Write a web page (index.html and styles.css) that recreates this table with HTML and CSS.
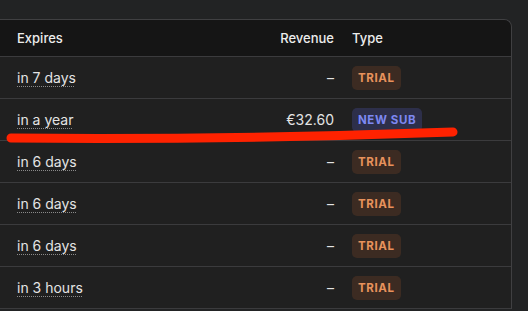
FILE: index.html
```html
<!DOCTYPE html>
<html>
<head>
<meta charset="utf-8">
<link rel="stylesheet" href="styles.css">
</head>
<body>
<div class="page">
  <div class="table">
    <div class="row head">
      <div class="cell c-exp">Expires</div>
      <div class="cell c-rev">Revenue</div>
      <div class="cell c-type">Type</div>
    </div>
    <div class="row">
      <div class="cell c-exp"><span class="rel">in 7 days</span></div>
      <div class="cell c-rev">–</div>
      <div class="cell c-type"><span class="badge trial">TRIAL</span></div>
    </div>
    <div class="row">
      <div class="cell c-exp"><span class="rel">in a year</span></div>
      <div class="cell c-rev">€32.60</div>
      <div class="cell c-type"><span class="badge sub">NEW SUB</span></div>
    </div>
    <div class="row">
      <div class="cell c-exp"><span class="rel">in 6 days</span></div>
      <div class="cell c-rev">–</div>
      <div class="cell c-type"><span class="badge trial">TRIAL</span></div>
    </div>
    <div class="row">
      <div class="cell c-exp"><span class="rel">in 6 days</span></div>
      <div class="cell c-rev">–</div>
      <div class="cell c-type"><span class="badge trial">TRIAL</span></div>
    </div>
    <div class="row">
      <div class="cell c-exp"><span class="rel">in 6 days</span></div>
      <div class="cell c-rev">–</div>
      <div class="cell c-type"><span class="badge trial">TRIAL</span></div>
    </div>
    <div class="row">
      <div class="cell c-exp"><span class="rel">in 3 hours</span></div>
      <div class="cell c-rev">–</div>
      <div class="cell c-type"><span class="badge trial">TRIAL</span></div>
    </div>
  </div>
  <svg class="mark" width="528" height="311" viewBox="0 0 528 311">
    <path d="M11 138 Q 230 140 453 132" fill="none" stroke="#ff2200" stroke-width="9" stroke-linecap="round"/>
  </svg>
</div>
</body>
</html>
```

FILE: styles.css
```css
html, body {
  margin: 0;
  padding: 0;
  background: #222324;
  overflow: hidden;
}
.page {
  position: relative;
  width: 528px;
  height: 311px;
  padding-top: 19px;
  box-sizing: border-box;
  font-family: Inter, "Noto Sans", sans-serif;
  color: #e4e4e4;
}
.table {
  width: 511px;
  border: 1px solid #404042;
  border-left: none;
  border-bottom: none;
  border-radius: 0 8px 0 0;
  background: #202020;
  overflow: hidden;
}
.row {
  display: flex;
  height: 41px;
  border-bottom: 1px solid #3b3b3d;
  align-items: center;
  font-size: 14px;
}
.row.head {
  height: 36px;
  background: #151515;
  font-size: 13px;
  font-weight: 500;
  color: #ececec;
}
.c-exp {
  flex: 1;
  padding-left: 17px;
}
.c-rev {
  width: 120px;
  text-align: right;
  box-sizing: border-box;
}
.c-type {
  width: 177px;
  padding-left: 18px;
  box-sizing: border-box;
}
.rel {
  text-decoration: underline dotted #8a8a8a;
  text-underline-offset: 3px;
  text-decoration-thickness: 1px;
}
.badge {
  display: inline-block;
  height: 24px;
  line-height: 24px;
  padding: 0 6px;
  border-radius: 5px;
  font-size: 11.5px;
  font-weight: 700;
  letter-spacing: 0.6px;
}
.trial {
  background: #3c2b22;
  color: #e8925c;
}
.sub {
  background: #2d2f4a;
  color: #7d88f2;
}
.mark {
  position: absolute;
  left: 0;
  top: 0;
  pointer-events: none;
}
```
